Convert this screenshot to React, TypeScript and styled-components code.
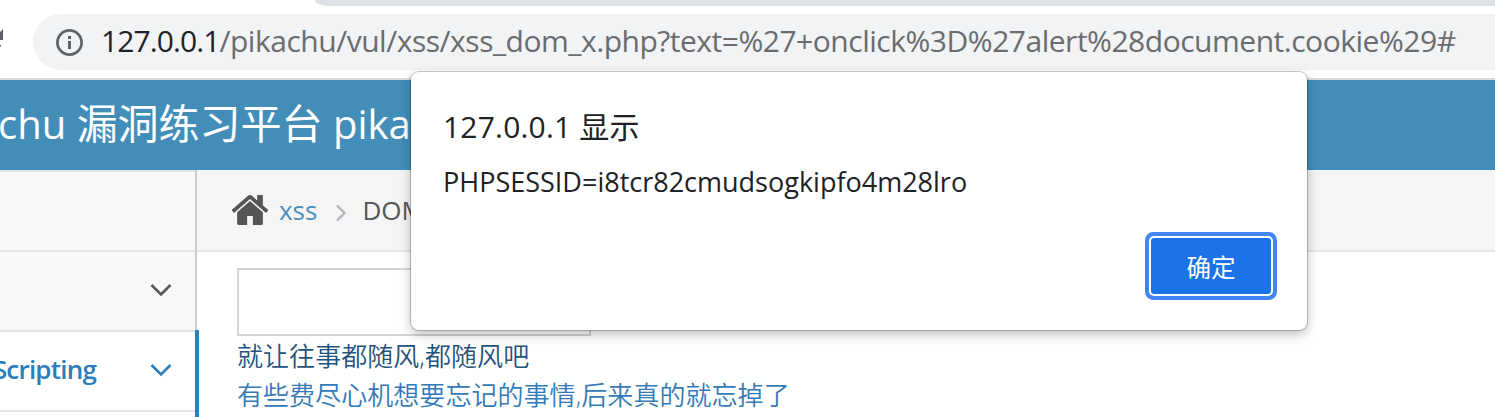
import React from 'react';
import styled, { createGlobalStyle } from 'styled-components';

const GlobalStyle = createGlobalStyle`
  *, *::before, *::after { box-sizing: border-box; }
  html, body { margin: 0; padding: 0; overflow: hidden; background: #fff; }
`;

const Page = styled.div`
  position: relative;
  width: 1495px;
  height: 417px;
  overflow: hidden;
  display: flex;
  flex-direction: column;
  font-family: 'Open Sans', 'Noto Sans CJK SC', sans-serif;
  color: #555;
`;

const TabStrip = styled.div`
  height: 6px;
  flex: none;
  margin-left: 315px;
  background: #dee1e6;
  border-bottom-left-radius: 14px 6px;
`;

const Toolbar = styled.div`
  height: 74px;
  flex: none;
  display: flex;
  align-items: flex-start;
  padding-top: 8px;
  border-bottom: 2px solid #dadbdc;
`;

const ReloadSlot = styled.div`
  width: 33px;
  height: 56px;
  flex: none;
`;

const AddressBar = styled.div`
  flex: 1;
  height: 56px;
  display: flex;
  align-items: center;
  padding-left: 22px;
  background: #f1f3f4;
  border-radius: 28px 0 0 28px;
`;

const Url = styled.div`
  margin: 0 0 2px 18px;
  white-space: nowrap;
  font-size: 30px;
  line-height: 54px;
  letter-spacing: -0.48px;
  color: #6a6c6f;
`;

const Host = styled.span`
  color: #202124;
  letter-spacing: -0.9px;
`;

const SiteHeader = styled.header`
  height: 90px;
  flex: none;
  background: #438eb9;
  display: flex;
  align-items: flex-start;
`;

const SiteTitle = styled.div`
  margin-left: -2px;
  white-space: nowrap;
  color: #fff;
  font-size: 40px;
  line-height: 86px;
`;

const TitleHan = styled.span`
  font-size: 41px;
`;

const Body = styled.div`
  flex: 1;
  display: flex;
  min-height: 0;
`;

const Sidebar = styled.nav`
  width: 199px;
  flex: none;
  display: flex;
  flex-direction: column;
`;

const SideItem = styled.div<{ $active?: boolean }>`
  height: 80px;
  width: ${p => (p.$active ? 199 : 197)}px;
  flex: none;
  display: flex;
  align-items: center;
  justify-content: flex-end;
  padding-right: 23px;
  background: linear-gradient(#e5e5e5 2px, ${p => (p.$active ? '#fff' : '#f8f8f8')} 2px);
  border-right: ${p => (p.$active ? '4px solid #2b7dbc' : '2px solid #ccc')};
  color: ${p => (p.$active ? '#2b7dbc' : '#585858')};
`;

const SideLabel = styled.span`
  flex: none;
  white-space: nowrap;
  font-size: 26px;
  line-height: 36px;
  font-weight: 600;
  letter-spacing: -0.8px;
  margin: 0 54px 2px 0;
`;

const Chevron = styled.svg`
  flex: none;
`;

const Main = styled.main`
  flex: 1;
  margin-left: -2px;
  display: flex;
  flex-direction: column;
`;

const Breadcrumb = styled.div`
  height: 82px;
  flex: none;
  display: flex;
  align-items: center;
  padding-left: 35px;
  background: #f5f5f5;
  border-bottom: 2px solid #e5e5e5;
  font-size: 26px;
`;

const Crumb = styled.span<{ $link?: boolean }>`
  color: ${p => (p.$link ? '#4c8fbd' : '#555')};
  white-space: nowrap;
`;

const Content = styled.div`
  padding: 16px 0 0 40px;
  display: flex;
  flex-direction: column;
  align-items: flex-start;
`;

const TextInput = styled.input`
  width: 354px;
  height: 68px;
  border: 2px solid #d5d5d5;
  outline: none;
  background: #fff;
  display: block;
`;

const Line = styled.a<{ $dark?: boolean }>`
  height: 39px;
  line-height: 41px;
  font-size: 26px;
  letter-spacing: 0.05px;
  font-weight: 350;
  white-space: nowrap;
  color: ${p => (p.$dark ? '#23527c' : '#337ab7')};
`;

const Dialog = styled.div`
  position: absolute;
  left: 411px;
  top: 72px;
  width: 896px;
  height: 258px;
  padding: 34px 32px 0;
  display: flex;
  flex-direction: column;
  background: #fff;
  border-radius: 8px;
  box-shadow: 0 0 0 1px rgba(0, 0, 0, 0.2), 0 4px 12px rgba(0, 0, 0, 0.28);
  color: #202124;
  white-space: nowrap;
`;

const DialogTitle = styled.div`
  font-size: 30px;
  line-height: 42px;
  letter-spacing: 0.2px;
`;

const DialogText = styled.div`
  margin-top: 16px;
  font-size: 27px;
  line-height: 36px;
`;

const OkButton = styled.button`
  align-self: flex-end;
  margin: 38px 4px 0 0;
  width: 120px;
  height: 56px;
  padding: 0;
  border: none;
  border-radius: 3px;
  background: #1a73e8;
  box-shadow: 0 0 0 2px #fff, 0 0 0 6px #4285f4;
  color: #fff;
  font-family: 'Noto Sans CJK SC', sans-serif;
  font-size: 24.5px;
  line-height: 58px;
`;

const ReloadIcon = () => (
  <svg width="4" height="56" viewBox="0 0 4 56">
    <path d="M3 15v11h-3v-8z M0 31h1v1.5h-1z" fill="#5f6368" />
  </svg>
);

const InfoIcon = () => (
  <svg width="28" height="28" viewBox="0 0 28 28">
    <circle cx="14.5" cy="14.5" r="12.1" fill="none" stroke="#5f6368" strokeWidth="2.7" />
    <path d="M13 8h3v3h-3z M13 13h3v8h-3z" fill="#5f6368" />
  </svg>
);

const HomeIcon = () => (
  <svg width="36" height="30" viewBox="26 253 1612 1283" preserveAspectRatio="none">
    <path
      fill="#555"
      d="M1408 992v480q0 26-19 45t-45 19H960v-384H704v384H320q-26 0-45-19t-19-45V992q0-1 .5-3t.5-3l575-474 575 474q1 2 1 6zm223-69l-62 74q-8 9-21 11h-3q-13 0-21-7L832 424l-692 577q-12 8-24 7-13-2-21-11l-62-74q-8-10-7-23.5T37 878l719-599q32-26 76-26t76 26l244 204V288q0-14 9-23t23-9h192q14 0 23 9t9 23v408l219 182q10 8 11 21.5t-7 23.5z"
    />
  </svg>
);

const Separator = styled.svg`
  margin: 5px 16px 0 19px;
`;

const ChevronDown = () => (
  <Chevron width="22" height="14" viewBox="0 0 22 14">
    <path d="M1.5 2L11 11.5L20.5 2" fill="none" stroke="currentColor" strokeWidth="2.6" />
  </Chevron>
);

const HomeSlot = styled.span`
  display: flex;
  margin: 0 11px 1px 0;
`;

export default function App() {
  return (
    <Page>
      <GlobalStyle />
      <TabStrip />
      <Toolbar>
        <ReloadSlot>
          <ReloadIcon />
        </ReloadSlot>
        <AddressBar>
          <InfoIcon />
          <Url>
            <Host>127.0.0.1</Host>
            /pikachu/vul/xss/xss_dom_x.php?text=%27+onclick%3D%27alert%28document.cookie%29#
          </Url>
        </AddressBar>
      </Toolbar>
      <SiteHeader>
        <SiteTitle>
          chu <TitleHan>漏洞练习平台</TitleHan> pika
        </SiteTitle>
      </SiteHeader>
      <Body>
        <Sidebar>
          <SideItem />
          <SideItem>
            <ChevronDown />
          </SideItem>
          <SideItem $active>
            <SideLabel>Scripting</SideLabel>
            <ChevronDown />
          </SideItem>
          <SideItem $active />
        </Sidebar>
        <Main>
          <Breadcrumb>
            <HomeSlot>
              <HomeIcon />
            </HomeSlot>
            <Crumb $link>xss</Crumb>
            <Separator width="10" height="18" viewBox="0 0 10 18">
              <path d="M1 1.5L8.5 9L1 16.5" fill="none" stroke="#b2b6bf" strokeWidth="2.4" />
            </Separator>
            <Crumb>DOM</Crumb>
          </Breadcrumb>
          <Content>
            <TextInput />
            <Line $dark>就让往事都随风,都随风吧</Line>
            <Line>有些费尽心机想要忘记的事情,后来真的就忘掉了</Line>
          </Content>
        </Main>
      </Body>
      <Dialog role="alertdialog">
        <DialogTitle>127.0.0.1 显示</DialogTitle>
        <DialogText>PHPSESSID=i8tcr82cmudsogkipfo4m28lro</DialogText>
        <OkButton>确定</OkButton>
      </Dialog>
    </Page>
  );
}
